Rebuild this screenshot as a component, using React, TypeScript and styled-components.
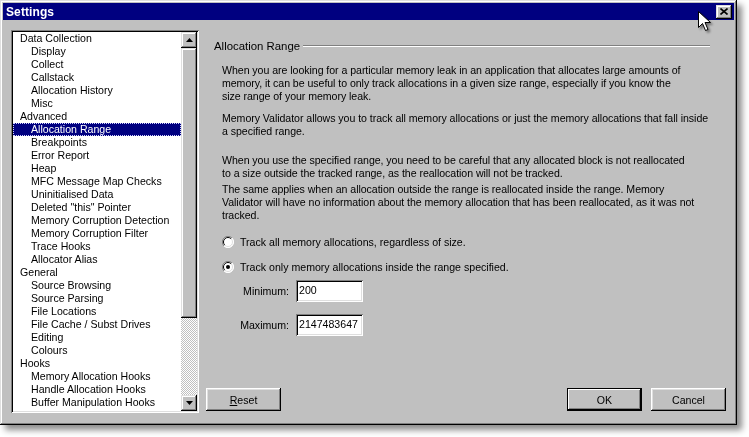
import React from "react";
import styled, { createGlobalStyle } from "styled-components";

const GlobalStyle = createGlobalStyle`
  html, body { margin: 0; padding: 0; background: #ffffff; }
  body { font-family: "Liberation Sans", Arial, sans-serif; font-size: 10.6px; color: #000; }
  * { box-sizing: border-box; }
`;

const raised = `
  box-shadow: inset -1px -1px #000000, inset 1px 1px #dfdfdf, inset -2px -2px #808080, inset 2px 2px #ffffff;
`;
const sunken = `
  box-shadow: inset 1px 1px #808080, inset -1px -1px #ffffff, inset 2px 2px #000000, inset -2px -2px #dfdfdf;
`;

const Stage = styled.div`
  position: relative;
  width: 749px;
  height: 437px;
  overflow: hidden;
  background: #ffffff;
`;

const Window = styled.div`
  width: 737px;
  height: 425px;
  background: #c0c0c0;
  padding: 3px;
  display: flex;
  flex-direction: column;
  ${raised}
  filter: drop-shadow(5px 5px 3px rgba(0, 0, 0, 0.45));
`;

const TitleBar = styled.div`
  height: 17px;
  background: #000080;
  display: flex;
  align-items: center;
  padding: 0 2px 0 3px;
  flex-shrink: 0;
`;

const Title = styled.div`
  flex: 1;
  color: #ffffff;
  font-weight: bold;
  font-size: 12px;
  letter-spacing: 0.1px;
  padding-top: 1px;
`;

const CloseButton = styled.div`
  width: 16px;
  height: 14px;
  background: #c0c0c0;
  ${raised}
  display: flex;
  align-items: center;
  justify-content: center;
`;

const Body = styled.div`
  flex: 1;
  display: flex;
  gap: 7px;
  padding: 10px 8px 9px 8px;
  min-height: 0;
`;

const ListBox = styled.div`
  width: 188px;
  flex-shrink: 0;
  background: #ffffff;
  padding: 2px;
  display: flex;
  ${sunken}
`;

const ListItems = styled.div`
  flex: 1;
  overflow: hidden;
`;

const Item = styled.div<{ $level: number; $selected?: boolean }>`
  height: 13px;
  line-height: 13px;
  white-space: nowrap;
  padding-left: ${(p) => (p.$level === 0 ? 7 : 18)}px;
  background: ${(p) => (p.$selected ? "#000080" : "transparent")};
  color: ${(p) => (p.$selected ? "#ffffff" : "#000000")};
  outline: ${(p) => (p.$selected ? "1px dotted #d0d0ff" : "none")};
  outline-offset: -1px;
`;

const ScrollBar = styled.div`
  width: 16px;
  display: flex;
  flex-direction: column;
  background: repeating-conic-gradient(#c0c0c0 0 25%, #ffffff 0 50%) 0 0 / 2px 2px;
`;

const ArrowButton = styled.div`
  width: 16px;
  height: 16px;
  background: #c0c0c0;
  ${raised}
  display: flex;
  align-items: center;
  justify-content: center;
  flex-shrink: 0;
`;

const Thumb = styled.div`
  height: 270px;
  background: #c0c0c0;
  ${raised}
`;

const Track = styled.div`
  flex: 1;
`;

const Panel = styled.div`
  flex: 1;
  min-width: 0;
  display: flex;
  flex-direction: column;
  padding: 9px 0 2px 0;
`;

const GroupHeader = styled.div`
  display: flex;
  align-items: center;
  height: 13px;
  padding-left: 8px;
  padding-right: 16px;
`;

const GroupTitle = styled.span`
  white-space: nowrap;
  font-size: 11.4px;
`;

const Etch = styled.div`
  flex: 1;
  margin-left: 3px;
  height: 2px;
  border-top: 1px solid #808080;
  border-bottom: 1px solid #ffffff;
`;

const Para = styled.div<{ $top: number }>`
  margin-top: ${(p) => p.$top}px;
  padding-left: 16px;
  line-height: 13px;
  white-space: nowrap;
  letter-spacing: -0.05px;
`;

const RadioRow = styled.div<{ $top: number }>`
  margin-top: ${(p) => p.$top}px;
  padding-left: 16px;
  height: 13px;
  display: flex;
  align-items: center;
  gap: 6px;
  white-space: nowrap;
`;

const RadioCircle = styled.div`
  width: 12px;
  height: 12px;
  flex-shrink: 0;
  display: flex;
  align-items: center;
  justify-content: center;
`;

const FieldRow = styled.div<{ $top: number }>`
  margin-top: ${(p) => p.$top}px;
  display: flex;
  align-items: center;
  gap: 7px;
  padding-left: 16px;
`;

const FieldLabel = styled.div`
  width: 67px;
  text-align: right;
  white-space: nowrap;
`;

const Input = styled.div`
  width: 67px;
  height: 22px;
  background: #ffffff;
  padding: 3px 3px 0 3px;
  line-height: 14px;
  ${sunken}
`;

const ButtonRow = styled.div`
  margin-top: auto;
  display: flex;
  align-items: center;
  gap: 9px;
`;

const Spacer = styled.div`
  flex: 1;
`;

const Button = styled.div<{ $default?: boolean }>`
  width: 75px;
  height: 23px;
  background: #c0c0c0;
  display: flex;
  align-items: center;
  justify-content: center;
  ${(p) =>
    p.$default
      ? `box-shadow: inset 0 0 0 1px #000000, inset -2px -2px #000000, inset 2px 2px #ffffff, inset -3px -3px #808080;`
      : `box-shadow: inset -1px -1px #000000, inset 1px 1px #ffffff, inset -2px -2px #808080, inset 2px 2px #dfdfdf;`}
`;

const Cursor = styled.svg`
  position: absolute;
  left: 698px;
  top: 11px;
  filter: drop-shadow(2px 2px 1px rgba(0, 0, 0, 0.4));
`;

const items: { label: string; level: number; selected?: boolean }[] = [
  { label: "Data Collection", level: 0 },
  { label: "Display", level: 1 },
  { label: "Collect", level: 1 },
  { label: "Callstack", level: 1 },
  { label: "Allocation History", level: 1 },
  { label: "Misc", level: 1 },
  { label: "Advanced", level: 0 },
  { label: "Allocation Range", level: 1, selected: true },
  { label: "Breakpoints", level: 1 },
  { label: "Error Report", level: 1 },
  { label: "Heap", level: 1 },
  { label: "MFC Message Map Checks", level: 1 },
  { label: "Uninitialised Data", level: 1 },
  { label: 'Deleted "this" Pointer', level: 1 },
  { label: "Memory Corruption Detection", level: 1 },
  { label: "Memory Corruption Filter", level: 1 },
  { label: "Trace Hooks", level: 1 },
  { label: "Allocator Alias", level: 1 },
  { label: "General", level: 0 },
  { label: "Source Browsing", level: 1 },
  { label: "Source Parsing", level: 1 },
  { label: "File Locations", level: 1 },
  { label: "File Cache / Subst Drives", level: 1 },
  { label: "Editing", level: 1 },
  { label: "Colours", level: 1 },
  { label: "Hooks", level: 0 },
  { label: "Memory Allocation Hooks", level: 1 },
  { label: "Handle Allocation Hooks", level: 1 },
  { label: "Buffer Manipulation Hooks", level: 1 },
];

const Radio = ({ checked }: { checked?: boolean }) => (
  <RadioCircle>
    <svg width="12" height="12" viewBox="0 0 12 12">
      <circle cx="6" cy="6" r="5.5" fill="#ffffff" />
      <path d="M10 2 A5.5 5.5 0 0 0 2 10" fill="none" stroke="#808080" strokeWidth="1" />
      <path d="M9.2 2.8 A4.5 4.5 0 0 0 2.8 9.2" fill="none" stroke="#000000" strokeWidth="1" />
      <path d="M2 10 A5.5 5.5 0 0 0 10 2" fill="none" stroke="#ffffff" strokeWidth="1" />
      <path d="M2.8 9.2 A4.5 4.5 0 0 0 9.2 2.8" fill="none" stroke="#dfdfdf" strokeWidth="1" />
      {checked && <circle cx="6" cy="6" r="2" fill="#000000" />}
    </svg>
  </RadioCircle>
);

const UpArrow = () => (
  <svg width="7" height="4" viewBox="0 0 7 4">
    <path d="M3.5 0 L7 4 L0 4 Z" fill="#000" />
  </svg>
);
const DownArrow = () => (
  <svg width="7" height="4" viewBox="0 0 7 4">
    <path d="M0 0 L7 0 L3.5 4 Z" fill="#000" />
  </svg>
);

export default function App() {
  return (
    <Stage>
      <GlobalStyle />
      <Window>
        <TitleBar>
          <Title>Settings</Title>
          <CloseButton>
            <svg width="8" height="7" viewBox="0 0 8 7">
              <path d="M0.5 0.5 L7.5 6.5 M7.5 0.5 L0.5 6.5" stroke="#000" strokeWidth="1.6" />
            </svg>
          </CloseButton>
        </TitleBar>
        <Body>
          <ListBox>
            <ListItems>
              {items.map((it) => (
                <Item key={it.label} $level={it.level} $selected={it.selected}>
                  {it.label}
                </Item>
              ))}
            </ListItems>
            <ScrollBar>
              <ArrowButton>
                <UpArrow />
              </ArrowButton>
              <Thumb />
              <Track />
              <ArrowButton>
                <DownArrow />
              </ArrowButton>
            </ScrollBar>
          </ListBox>
          <Panel>
            <GroupHeader>
              <GroupTitle>Allocation Range</GroupTitle>
              <Etch />
            </GroupHeader>
            <Para $top={12}>
              When you are looking for a particular memory leak in an application that allocates large amounts of
              <br />
              memory, it can be useful to only track allocations in a given size range, especially if you know the
              <br />
              size range of your memory leak.
            </Para>
            <Para $top={9}>
              Memory Validator allows you to track all memory allocations or just the memory allocations that fall inside
              <br />
              a specified range.
            </Para>
            <Para $top={16}>
              When you use the specified range, you need to be careful that any allocated block is not reallocated
              <br />
              to a size outside the tracked range, as the reallocation will not be tracked.
            </Para>
            <Para $top={3}>
              The same applies when an allocation outside the range is reallocated inside the range. Memory
              <br />
              Validator will have no information about the memory allocation that has been reallocated, as it was not
              <br />
              tracked.
            </Para>
            <RadioRow $top={13}>
              <Radio />
              <span>Track all memory allocations, regardless of size.</span>
            </RadioRow>
            <RadioRow $top={12}>
              <Radio checked />
              <span>Track only memory allocations inside the range specified.</span>
            </RadioRow>
            <FieldRow $top={7}>
              <FieldLabel>Minimum:</FieldLabel>
              <Input>200</Input>
            </FieldRow>
            <FieldRow $top={12}>
              <FieldLabel>Maximum:</FieldLabel>
              <Input>2147483647</Input>
            </FieldRow>
            <ButtonRow>
              <Button>
                <span>
                  <u>R</u>eset
                </span>
              </Button>
              <Spacer />
              <Button $default>OK</Button>
              <Button>Cancel</Button>
            </ButtonRow>
          </Panel>
        </Body>
      </Window>
      <Cursor width="13" height="21" viewBox="0 0 13 21">
        <path
          d="M0.5 0.5 L0.5 16.5 L4.5 12.5 L7.5 19.5 L10 18.5 L7 11.5 L12.5 11.5 Z"
          fill="#ffffff"
          stroke="#000000"
          strokeWidth="1"
          strokeLinejoin="miter"
        />
      </Cursor>
    </Stage>
  );
}
